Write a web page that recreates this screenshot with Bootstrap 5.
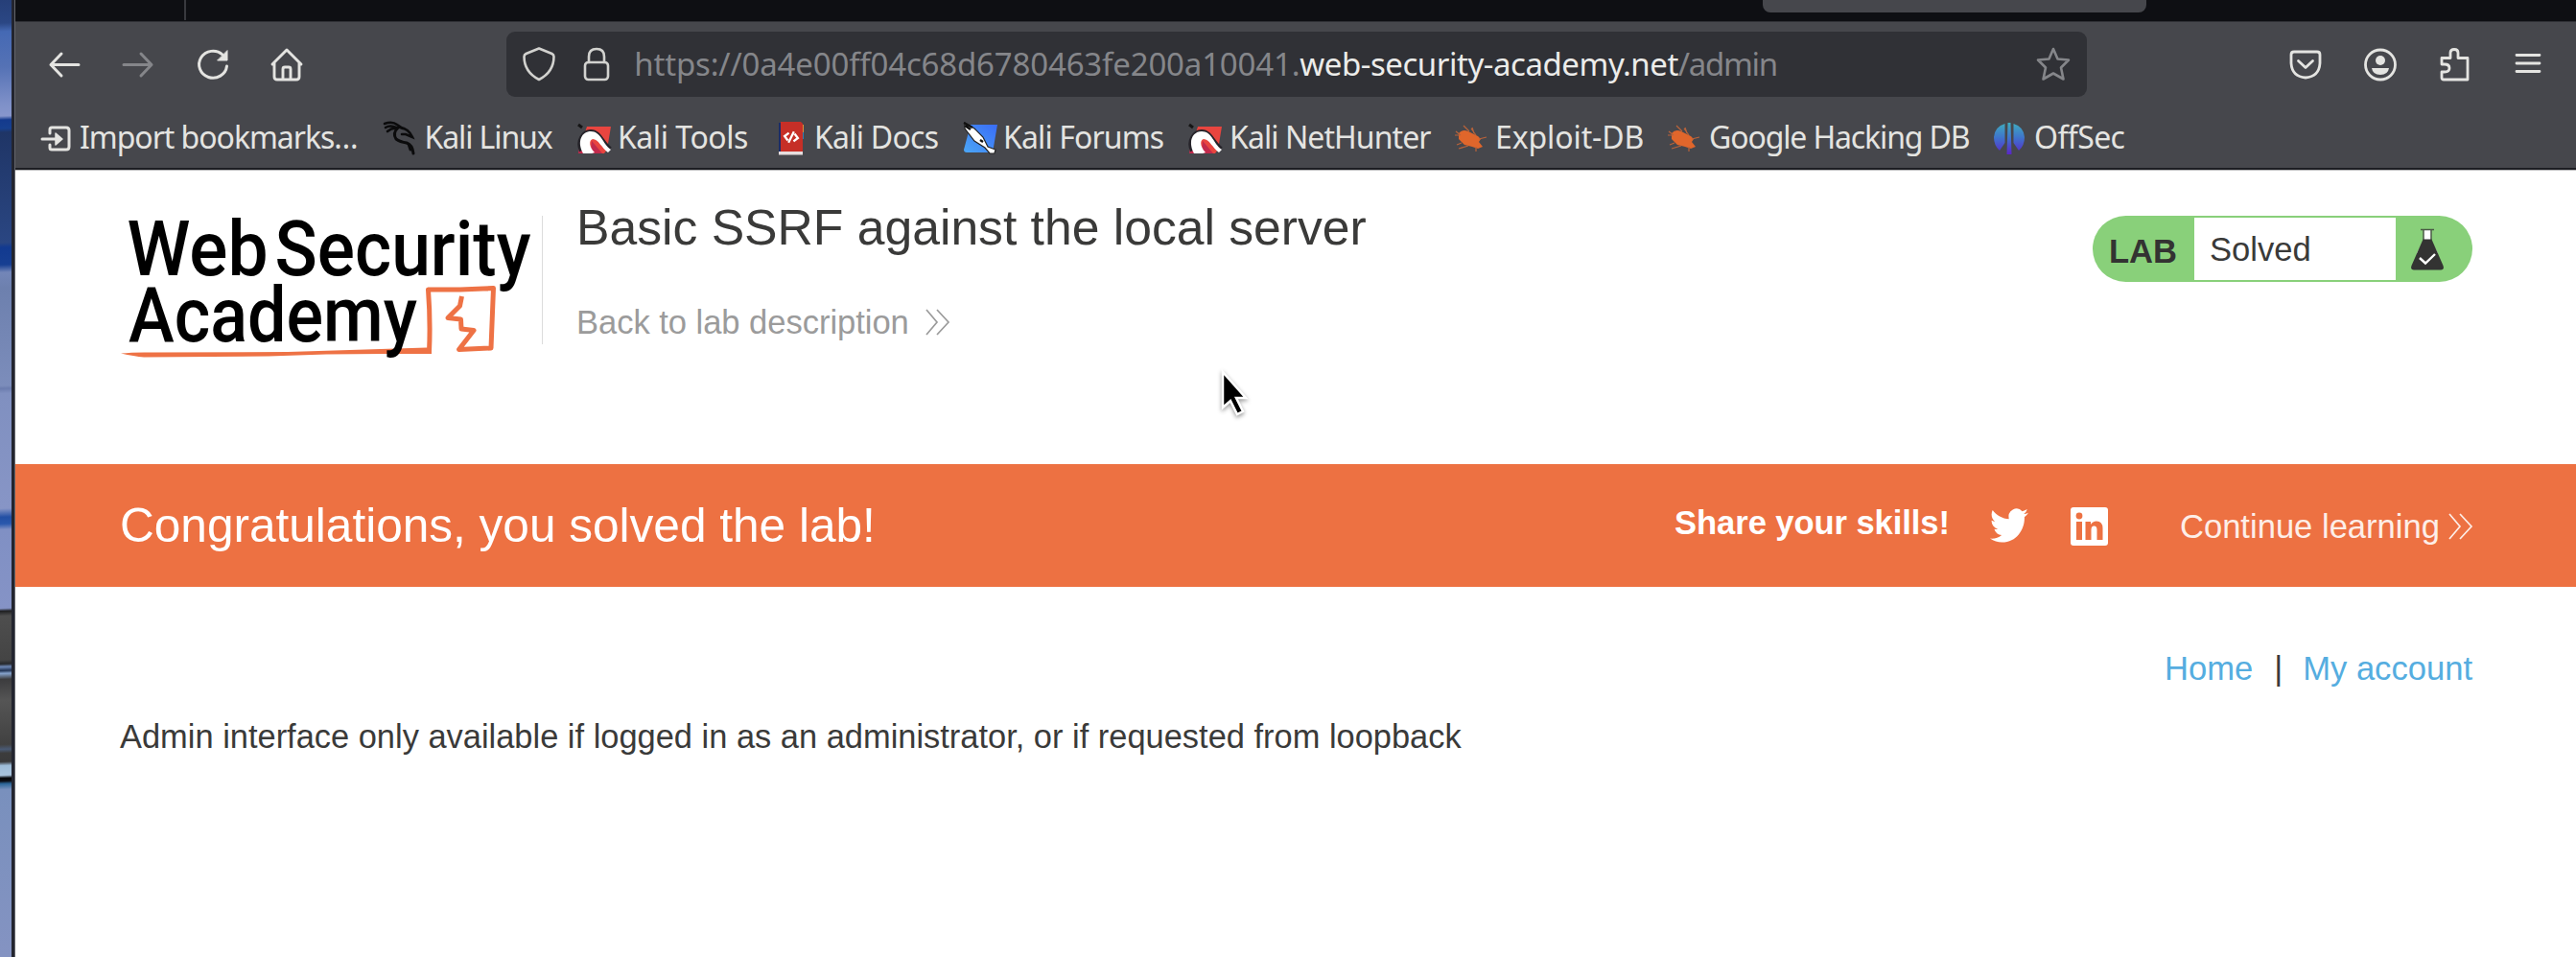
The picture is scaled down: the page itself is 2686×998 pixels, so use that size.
<!DOCTYPE html>
<html lang="en">
<head>
<meta charset="utf-8">
<meta name="viewport" content="width=device-width, initial-scale=1">
<title>Basic SSRF against the local server</title>
<link href="https://cdn.jsdelivr.net/npm/bootstrap@5.3.0/dist/css/bootstrap.min.css" rel="stylesheet">
<style>
body{font-family:"Liberation Sans",Arial,sans-serif;font-size:34.6px;line-height:40px;color:#3a3a39;background:#fff;height:998px;overflow:hidden}
a{text-decoration:none;color:inherit}
svg{display:block;flex:none;overflow:visible}
/* desktop wallpaper visible beside the window */
.desk{width:12px;flex:none;background:linear-gradient(178deg,#263f78 0,#2b4784 24px,#4569b4 33px,#5572b5 70px,#7e90c8 108px,#8796cc 121px,#143a8d 125px,#17408f 134px,#1f3566 138px,#2a4682 253px,#123a90 258px,#173f92 276px,#7386b8 284px,#6d80ae 300px,#7c8dbb 402px,#6b7cae 405px,#8090c0 410px,#8795c6 530px,#2350a4 539px,#2958ad 546px,#8090c4 552px,#8593c6 634px,#1f2022 637px,#4e4e4e 642px,#444 688px,#26282c 692px,#6c86b4 695px,#223454 699px,#86a3cc 702px,#3c3c3e 708px,#555 730px,#414141 776px,#4a5a74 781px,#3c3c3c 785px,#39393a 794px,#9dbcd8 798px,#a9c4de 808px,#08090c 811px,#0a0b10 814px,#2c6698 817px,#7990bd 823px,#8493c2 998px)}
.frame{width:4px;flex:none;background:#23252f;border-right:1px solid #63656b}
.tabs{height:23px;background:#0e0f13;border-bottom:1px solid #2f3035}
.tabs .sep{width:2px;height:21px;margin-left:176px;background:#38393e}
.tabs .pop{width:400px;height:13px;margin-left:1644px;background:#46474c;border-radius:0 0 8px 8px}
.chrome{background:#46474c;color:#e4e4e1;font-family:"Noto Sans",sans-serif}
.tools{height:87px;padding-left:33px}
.tools .set{gap:41.4px}
.addr{width:1648px;height:68px;margin-left:211px;background:#303136;border-radius:9px;padding:0 17px 0 16px;font-size:33px;letter-spacing:-.17px;color:#85868a;white-space:nowrap}
.addr b{font-weight:400;color:#ececea;letter-spacing:-.46px}
.addr i{font-style:normal;letter-spacing:-1.3px}
.marks{height:65px;padding-left:25px;display:grid;grid-template-columns:358px 203px 205px 197px 235px 276px 222px 340px 200px;font-size:32px;letter-spacing:-1px;white-space:nowrap}
.marks a{display:flex;align-items:center;gap:6px}
.marks a:nth-child(n+7){gap:8px}
.edge{height:3px;background:#1d1e23;border-bottom:1px solid #b9b9bb}
.ln{fill:none;stroke:currentColor;stroke-width:2.6;stroke-linecap:round;stroke-linejoin:round}
.head{height:306px;padding:0 108px 0 109px}
.logo{margin-top:42px}
.rule{width:1px;height:134px;margin-top:47px;background:#dcdcdc}
.titles{margin:29px 0 0 35px}
.titles h2{font-size:51.7px;line-height:60px;font-weight:400;margin:0 0 49px;letter-spacing:-.02px}
.back{color:#9b9b9b;letter-spacing:-.05px}
.pill{width:396px;height:69px;margin-top:47px;background:#89d07a;border-radius:35px;padding:2px 0}
.pill strong{width:106px;padding-left:17px;line-height:70px;color:#333332}
.pill span{width:210px;background:#fff;padding-left:16px;line-height:66px}
.congrats{height:128px;background:#ed7142;color:#fff;padding:0 107px 0 109px}
.congrats h3{font-size:49.6px;line-height:60px;font-weight:400;margin:0;letter-spacing:-.02px}
.links{margin-top:65px;padding-right:108px}
.links a{color:#55ade0}
.msg{margin:31px 0 0 109px;font-size:34.43px}
.ptr{position:absolute;left:1270px;top:384px}
</style>
</head>
<body class="d-flex">
<div class="desk"></div><div class="frame"></div>
<main class="flex-fill d-flex flex-column">
  <div class="tabs d-flex align-items-start"><div class="sep"></div><div class="pop"></div></div>
  <header class="chrome">
    <nav class="tools d-flex align-items-center">
      <div class="set d-flex">
        <svg width="36" height="36" viewBox="0 0 36 36" class="ln" style="stroke-width:3"><path d="M33 18.500H4M15 7L4 18.500L15 30"/></svg>
        <svg width="36" height="36" viewBox="0 0 36 36" class="ln" style="stroke-width:3;color:#85868a"><path d="M3 18.500H32M21 7L32 18.500L21 30"/></svg>
        <svg width="36" height="36" viewBox="0 0 36 36" class="ln" style="stroke-width:3"><path d="M32.500 20A14.500 14 0 1 1 28 8"/><path d="M33 4V14H23z" fill="currentColor" stroke-width="1"/></svg>
        <svg width="36" height="36" viewBox="0 0 36 36" class="ln" style="stroke-width:2.900"><path d="M3 18L18 3L33 18M5 16V31Q5 34 8 34H28Q31 34 31 31V16M14 34V23Q14 21 16 21H20Q22 21 22 23V34"/></svg>
      </div>
      <div class="addr d-flex align-items-center">
        <svg width="36" height="36" viewBox="0 0 36 36" class="ln" style="color:#d2d2cf"><path d="M18 1.500L31.500 7Q33.500 8 33.500 10Q33.500 26 18 34Q2.500 26 2.500 10Q2.500 8 4.500 7z"/></svg>
        <svg width="36" height="36" viewBox="0 0 36 36" class="ln" style="color:#d2d2cf;margin-left:24px"><rect x="6" y="16" width="24" height="18" rx="3.500"/><path d="M10 16V10Q10 2 18 2Q26 2 26 10V16"/></svg>
        <span style="margin-left:21px">https://0a4e00ff04c68d6780463fe200a10041.<b>web-security-academy.net</b><i>/admin</i></span>
        <svg width="36" height="36" viewBox="0 0 36 36" class="ln ms-auto"><path d="M18 2L22.500 12.500L34 13.500L26 21.500L28.500 33.500L18 27.500L7.500 33.500L10 21.500L2 13.500L13.500 12.500z"/></svg>
      </div>
      <div class="set d-flex" style="margin-left:210px">
        <svg width="36" height="36" viewBox="0 0 36 36" class="ln" style="stroke-width:2.800"><path d="M6 5H30Q33 5 33 8V17Q32 31 18 32Q4 31 3 17V8Q3 5 6 5zM10.500 14.500L18 21.500L25.500 14.500"/></svg>
        <svg width="36" height="36" viewBox="0 0 36 36" class="ln" style="stroke-width:2.800"><ellipse cx="18" cy="18.500" rx="15.500" ry="15.500"/><circle cx="18" cy="14" r="5" fill="currentColor" stroke="none"/><path d="M9 22H27Q26 29 18 29Q10 29 9 22z" fill="currentColor" stroke="none"/></svg>
        <svg width="36" height="36" viewBox="0 0 36 36" class="ln" style="stroke-width:2.800"><path d="M5 11.500H14V6Q14 2.500 18 2.500Q22 2.500 22 6V11.500H32V34H7Q5 34 5 32V26H8Q13 26 13 22Q13 18 8 18H5z"/></svg>
        <svg width="36" height="36" viewBox="0 0 36 36" class="ln" style="stroke-width:2.800"><path d="M6 8.500H30M6 17H30M6 25.500H30"/></svg>
      </div>
    </nav>
    <nav class="marks">
      <a href="#"><svg width="36" height="36" viewBox="0 0 36 36" class="ln" style="stroke-width:3"><path d="M11 14V10Q11 8 13 8H28Q31 8 31 11V28Q31 31 28 31H13Q11 31 11 29V26M3 20H20"/><path d="M17 14L24 20L17 26z" fill="currentColor" stroke-width="1.500"/></svg><span style="letter-spacing:-1.04px">Import bookmarks…</span></a>
      <a href="#"><svg width="36" height="36" viewBox="0 0 36 36" fill="none" stroke="#0b0b0c" stroke-linecap="round"><path d="M2 4Q10 1 15 5L21 9M3 8Q8 5 14 8M5 12Q10 8 15 9" stroke-width="2.600"/><path d="M16 8Q10 14 14 20Q18 23 25 24Q31 26 32 35M27 25Q28 28 29 31" stroke-width="3"/><path d="M18 8Q27 9 31 18L24 15L20 15" stroke-width="2.600"/></svg><span style="letter-spacing:-1.1px;margin-left:1.500px">Kali Linux</span></a>
      <a href="#"><svg width="36" height="36" viewBox="0 0 36 36"><path d="M10 7H35L31 31L28 35H2L3 28z" fill="#e8453f"/><path d="M1 35L3 24L12 35zM15 22L26 35H14z" fill="#c22a4c"/><path d="M5 32C0 22 7 13 14 13C23 13 25 25 34 31" fill="none" stroke="#26242a" stroke-width="6"/><path d="M1 5l4 3" stroke="#151515" stroke-width="3"/><path d="M6 35C-1 22 5 12 14 12C25 12 26 25 35 31L32 34C25 29 22 20 16 20C12 21 12 28 18 34L15 35z" fill="#fff"/></svg><span style="letter-spacing:-.45px">Kali Tools</span></a>
      <a href="#"><svg width="36" height="36" viewBox="0 0 36 36"><path d="M5 3H10V35L5 33z" fill="#1c2c66"/><path d="M29 5h2v8h-2z" fill="#d8913c"/><path d="M29 13h2v7h-2z" fill="#2c7fb4"/><path d="M7 2H28L30 4V34H7z" fill="#c62f27"/><path d="M5 33H30V36.500H5z" fill="#e6dede"/><path d="M15 14L11 18L15 22M21 14L25 18L21 22M20 12L16 24" fill="none" stroke="#fff" stroke-width="2.300" transform="rotate(8 18 18)"/></svg><span style="letter-spacing:-.75px">Kali Docs</span></a>
      <a href="#"><svg width="36" height="36" viewBox="0 0 36 36"><defs><linearGradient id="fb" x1="1" y1="0" x2="0" y2="1"><stop offset="0" stop-color="#3a6cf6"/><stop offset="1" stop-color="#4ba6f5"/></linearGradient></defs><path d="M8 5H36L31 34H4Q1 34 1 31z" fill="url(#fb)"/><path d="M2 3L12 9L21 18L26 28L34 31L33 35L28 35L23 29L12 22L2 9z" fill="#fff" stroke="#222" stroke-width="1.200"/><path d="M1 3L10 8M2 6L8 10M18 21l3 2" stroke="#111" stroke-width="2.400"/></svg><span style="letter-spacing:-.87px">Kali Forums</span></a>
      <a href="#"><svg width="36" height="36" viewBox="0 0 36 36"><path d="M10 7H35L31 31L28 35H2L3 28z" fill="#e8453f"/><path d="M1 35L3 24L12 35zM15 22L26 35H14z" fill="#c22a4c"/><path d="M5 32C0 22 7 13 14 13C23 13 25 25 34 31" fill="none" stroke="#26242a" stroke-width="6"/><path d="M1 5l4 3" stroke="#151515" stroke-width="3"/><path d="M6 35C-1 22 5 12 14 12C25 12 26 25 35 31L32 34C25 29 22 20 16 20C12 21 12 28 18 34L15 35z" fill="#fff"/></svg><span style="letter-spacing:-.93px;margin-left:1px">Kali NetHunter</span></a>
      <a href="#"><svg width="36" height="36" viewBox="0 0 36 36"><path d="M6 14Q10 9 16 12L26 17L29 20L27 23L31 28L26 30L20 28L12 26L6 20z" fill="#e0662b"/><path d="M11 6L17 12M19 9L24 16M27 20L35 18M3 12L8 16M2 16H7M6 30L16 27M24 28V33M9 24L4 26M20 8L22 14" stroke="#b9633a" stroke-width="1.200"/></svg><span style="letter-spacing:-.1px">Exploit-DB</span></a>
      <a href="#"><svg width="36" height="36" viewBox="0 0 36 36"><path d="M6 14Q10 9 16 12L26 17L29 20L27 23L31 28L26 30L20 28L12 26L6 20z" fill="#e0662b"/><path d="M11 6L17 12M19 9L24 16M27 20L35 18M3 12L8 16M2 16H7M6 30L16 27M24 28V33M9 24L4 26M20 8L22 14" stroke="#b9633a" stroke-width="1.200"/></svg><span style="letter-spacing:-1.13px;margin-left:1px">Google Hacking DB</span></a>
      <a href="#"><svg width="36" height="36" viewBox="0 0 36 36"><defs><linearGradient id="os" gradientUnits="userSpaceOnUse" x1="0" y1="2" x2="0" y2="36"><stop offset="0" stop-color="#3fb0bd"/><stop offset=".5" stop-color="#3f72cc"/><stop offset="1" stop-color="#5a25c8"/></linearGradient></defs><path d="M13.500 4V24L8 32Q2 27 2 18Q3 7 13.500 4zM22.500 4V24L28 32Q34 27 34 18Q33 7 22.500 4zM16.500 3H19.500L20.500 36H15.500z" fill="url(#os)"/></svg><span style="letter-spacing:-.6px">OffSec</span></a>
    </nav>
    <div class="edge"></div>
  </header>

  <section class="head d-flex align-items-start">
    <svg class="logo" width="440" height="160" viewBox="125 220 440 160">
      <path d="M126 368.500Q140 367 160 367.500L300 367L445 362.500L450 364V369L400 369L340 369.500L280 371.500L150 372.500Q140 371.500 126 368.500z" fill="#ee7245"/>
      <path d="M447.500 367Q449 335 446.500 302L480 302L514.500 300.500L512 363L478.500 364.500L494 344.500L481 343L480.500 333L467 331.500L479.500 319L481.500 309" fill="none" stroke="#ee7245" stroke-width="5" stroke-linejoin="round"/>
      <g font-family="Roboto" font-weight="500" font-size="80" fill="#000">
        <text x="132.500" y="287" textLength="147" lengthAdjust="spacingAndGlyphs">Web</text>
        <text x="286.500" y="287" textLength="267" lengthAdjust="spacingAndGlyphs">Security</text>
        <text x="134" y="356" textLength="301" lengthAdjust="spacingAndGlyphs">Academy</text>
      </g>
    </svg>
    <div class="rule"></div>
    <div class="titles">
      <h2>Basic SSRF against the local server</h2>
      <a class="back d-flex align-items-center" href="#">Back to lab description<svg width="26" height="28" viewBox="0 0 26 28" fill="none" stroke="currentColor" stroke-width="1.700" style="margin-left:17px"><path d="M1 1L12 14L1 27M12 1L24 14L12 27"/></svg></a>
    </div>
    <div class="pill d-flex ms-auto"><strong>LAB</strong><span>Solved</span>
      <svg width="36" height="44" viewBox="0 0 36 44" style="margin:11px 0 0 15px"><path d="M14 2H22V13L29 26H7L14 13z" fill="#fff"/><path d="M11 1.500H25M14 2V12M22 2V12" stroke="#4a5a45" stroke-width="1.500"/><path d="M13.500 11.500H22.500L34.500 39Q36 43.500 32 43.500H4Q0 43.500 1.500 39z" fill="#333332"/><path d="M10 31L16 36.500L26 27" fill="none" stroke="#fff" stroke-width="2.400"/></svg>
    </div>
  </section>

  <section class="congrats d-flex align-items-center">
    <h3>Congratulations, you solved the lab!</h3>
    <div class="d-flex align-items-center ms-auto">
      <strong style="margin:-7px 42px 0 0;letter-spacing:-.08px">Share your skills!</strong>
      <svg width="40" height="36" viewBox="0 0 24 20" preserveAspectRatio="none" fill="#fff"><path d="M23.950 2.570a10 10 0 0 1-2.820.770 4.960 4.960 0 0 0 2.160-2.720 9.900 9.900 0 0 1-3.120 1.190 4.920 4.920 0 0 0-8.380 4.480C7.690 6.100 4.070 4.130 1.640 1.160a4.820 4.820 0 0 0-.670 2.480c0 1.710.870 3.210 2.190 4.100a4.900 4.900 0 0 1-2.230-.620v.060a4.920 4.920 0 0 0 3.950 4.830 5 5 0 0 1-2.210.080 4.940 4.940 0 0 0 4.600 3.420A9.870 9.870 0 0 1 0 17.540 13.990 13.990 0 0 0 7.550 19.750c9.050 0 14-7.500 14-13.980 0-.210 0-.420-.020-.630a9.940 9.940 0 0 0 2.460-2.550z"/></svg>
      <svg width="39" height="40" viewBox="0 0 39 40" style="margin:2px 75px 0 44px"><rect width="39" height="40" rx="3" fill="#fff"/><path d="M6 15H12V34H6zM15.500 15H21V18Q23 14.500 27 14.500Q33.500 14.500 33.500 22V34H27.500V23.500Q27.500 19.500 24.500 19.500Q21.500 19.500 21.500 23.500V34H15.500z" fill="#ed7142"/><circle cx="9" cy="9" r="3.400" fill="#ed7142"/></svg>
      <a class="d-flex align-items-center" href="#" style="padding-top:1px;color:#fdeee8">Continue learning<svg width="26" height="28" viewBox="0 0 26 28" fill="none" stroke="currentColor" stroke-width="1.700" style="margin-left:9px"><path d="M1 1L12 14L1 27M12 1L24 14L12 27"/></svg></a>
    </div>
  </section>

  <div class="links d-flex justify-content-end"><a href="#">Home</a><span style="margin:0 21px 0 22px">|</span><a href="#">My account</a></div>
  <p class="msg">Admin interface only available if logged in as an administrator, or if requested from loopback</p>
</main>
<svg class="ptr" width="36" height="52" viewBox="0 0 36 52"><path d="M5 4V41L13 34L20 48L26 45L19 31H29z" fill="#000" stroke="#fff" stroke-width="2.500" style="filter:drop-shadow(0 2px 2px rgba(0,0,0,.4))"/></svg>
<script src="https://cdn.jsdelivr.net/npm/bootstrap@5.3.0/dist/js/bootstrap.bundle.min.js"></script>
</body>
</html>
